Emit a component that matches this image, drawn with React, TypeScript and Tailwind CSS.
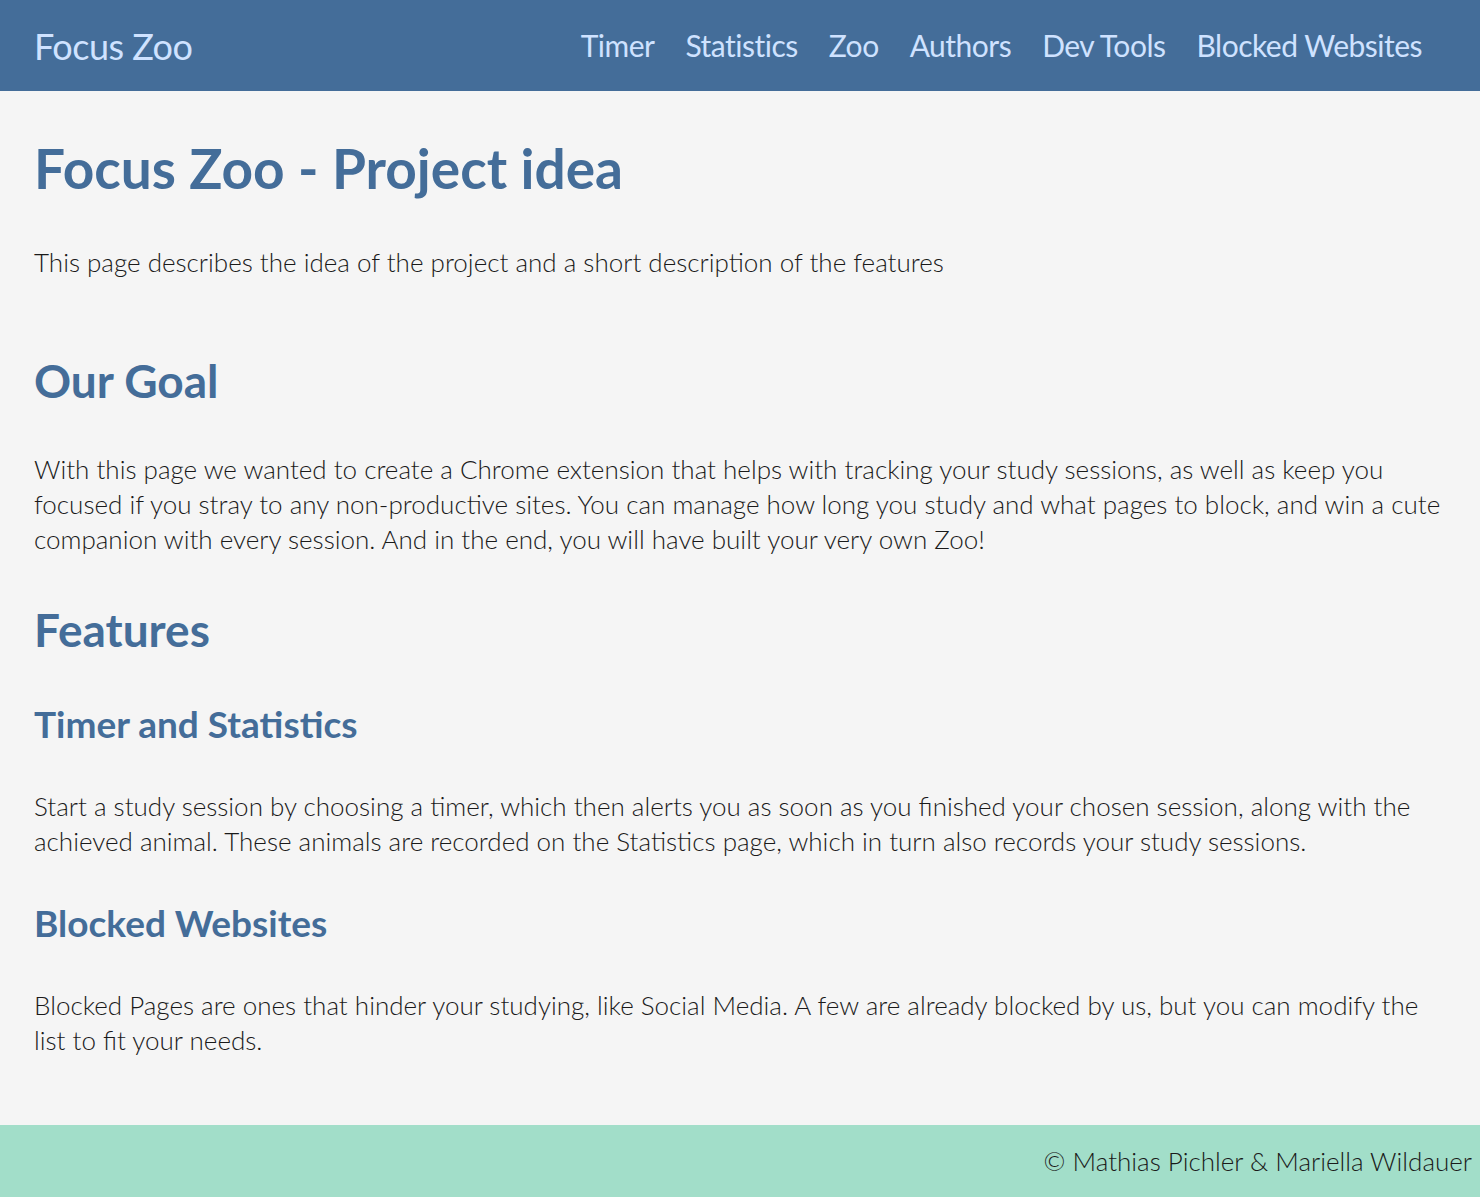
const navItems = ["Timer", "Statistics", "Zoo", "Authors", "Dev Tools", "Blocked Websites"];

const Header = () => (
  <header className="h-[91px] bg-[#446d99] flex items-center justify-between pl-[34px] pr-[58px]">
    <a className="text-[36px] text-[#cfe2ff] font-normal tracking-[-0.5px]">Focus Zoo</a>
    <nav className="flex gap-[31px]">
      {navItems.map((item) => (
        <a key={item} className="text-[30px] text-[#cfe2ff] font-normal tracking-[-0.5px]">
          {item}
        </a>
      ))}
    </nav>
  </header>
);

const Section = ({ title, gap, children }: { title: string; gap: string; children: React.ReactNode }) => (
  <section>
    <h3 className={`text-[37px] font-bold text-[#446d99] leading-none mb-[47px] ${gap}`}>{title}</h3>
    <p className="text-[26px] font-light text-[#1a1a1a] leading-[35px]">{children}</p>
  </section>
);

export default function App() {
  return (
    <div className="min-h-[1197px] flex flex-col bg-[#f5f5f5]" style={{ fontFamily: "Lato, 'Open Sans', sans-serif" }}>
      <Header />
      <main className="flex-1 px-[34px] pt-[50px] pb-[40px]">
        <h1 className="text-[55px] font-bold text-[#446d99] leading-none">Focus Zoo - Project idea</h1>
        <p className="text-[26px] font-light text-[#1a1a1a] mt-[47px]">
          This page describes the idea of the project and a short description of the features
        </p>
        <h2 className="text-[46px] font-bold text-[#446d99] leading-none mt-[76px]">Our Goal</h2>
        <p className="text-[26px] font-light text-[#1a1a1a] leading-[35px] mt-[48px]">
          With this page we wanted to create a Chrome extension that helps with tracking your study sessions, as well
          as keep you focused if you stray to any non-productive sites. You can manage how long you study and what
          pages to block, and win a cute companion with every session. And in the end, you will have built your very
          own Zoo!
        </p>
        <h2 className="text-[46px] font-bold text-[#446d99] leading-none mt-[50px]">Features</h2>
        <Section title="Timer and Statistics" gap="mt-[52px]">
          Start a study session by choosing a timer, which then alerts you as soon as you finished your chosen
          session, along with the achieved animal. These animals are recorded on the Statistics page, which in turn
          also records your study sessions.
        </Section>
        <Section title="Blocked Websites" gap="mt-[45px]">
          Blocked Pages are ones that hinder your studying, like Social Media. A few are already blocked by us, but
          you can modify the list to fit your needs.
        </Section>
      </main>
      <footer className="h-[72px] bg-[#a2dec9] flex items-center justify-end pr-[8px]">
        <span className="text-[26px] font-light text-[#1a1a1a] leading-none">© Mathias Pichler &amp; Mariella Wildauer</span>
      </footer>
    </div>
  );
}
